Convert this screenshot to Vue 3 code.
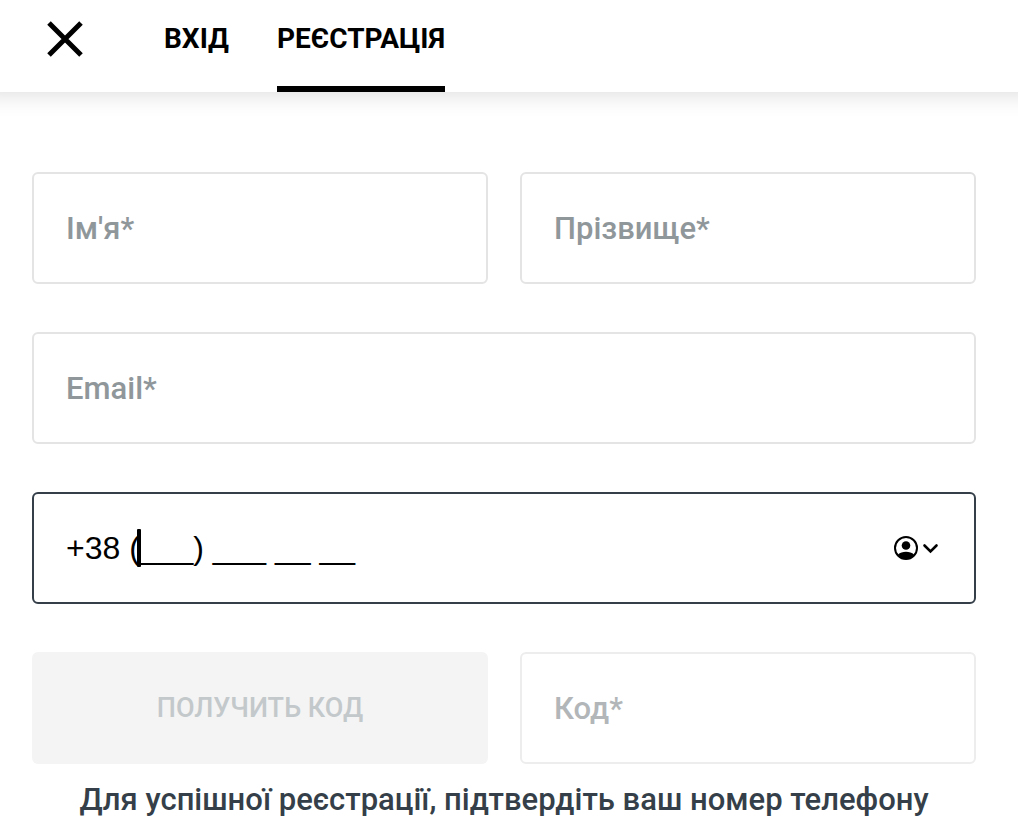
<script setup>
import { ref } from 'vue'

const firstName = ref('')
const lastName = ref('')
const email = ref('')
const phone = ref('+38 (___) ___ __ __')
const code = ref('')
</script>

<template>
  <main class="page">
    <header class="header">
      <button class="close" type="button" aria-label="Закрити">
        <svg width="36" height="36" viewBox="0 0 36 36" aria-hidden="true">
          <path d="M2 2L34 34M34 2L2 34" fill="none" stroke="#000" stroke-width="5" />
        </svg>
      </button>
      <nav class="tabs">
        <a class="tab" href="#login">ВХІД</a>
        <a class="tab active" href="#register" aria-current="page">РЕЄСТРАЦІЯ</a>
      </nav>
    </header>

    <form class="form" @submit.prevent>
      <input v-model="firstName" class="field" type="text" placeholder="Ім'я*" aria-label="Ім'я" />
      <input v-model="lastName" class="field" type="text" placeholder="Прізвище*" aria-label="Прізвище" />
      <input v-model="email" class="field wide" type="email" placeholder="Email*" aria-label="Email" />
      <div class="phone wide">
        <input v-model="phone" class="field focused" type="tel" aria-label="Номер телефону" />
        <span class="caret" aria-hidden="true"></span>
        <button class="autofill" type="button" aria-label="Автозаповнення контакту">
          <svg width="46" height="24" viewBox="0 0 46 24" aria-hidden="true">
            <circle cx="12" cy="12" r="11" fill="none" stroke="#000" stroke-width="2" />
            <circle cx="12" cy="9.5" r="4.3" fill="#000" />
            <path d="M4 18.5C6 16.6 8.8 15.8 12 15.8S18 16.6 20 18.5C18 21.5 15 23 12 23S6 21.5 4 18.5Z" fill="#000" />
            <path d="M30.5 9.5L36.5 15.5L42.5 9.5" fill="none" stroke="#000" stroke-width="2.6" stroke-linecap="round" stroke-linejoin="miter" />
          </svg>
        </button>
      </div>
      <button class="get-code" type="button" disabled>ПОЛУЧИТЬ КОД</button>
      <input v-model="code" class="field" type="text" placeholder="Код*" aria-label="Код" disabled />
    </form>
    <p class="note">Для успішної реєстрації, підтвердіть ваш номер телефону</p>
  </main>
</template>

<style>
body {
  margin: 0;
  background: #fff;
}
</style>

<style scoped>
.page {
  font-family: Roboto, "Noto Sans", sans-serif;
  color: #000;
}

.header {
  display: flex;
  align-items: stretch;
  height: 92px;
  padding-left: 47px;
  box-shadow: 0 -24px 24px 24px rgba(0, 0, 0, 0.16);
}

.close {
  display: flex;
  align-items: flex-start;
  margin: 0;
  padding: 21px 0 0;
  border: 0;
  background: none;
}

.tabs {
  display: flex;
  gap: 48px;
  margin-left: 81px;
}

.tab {
  box-sizing: border-box;
  padding-top: 22px;
  border-bottom: 6px solid transparent;
  color: #000;
  font-size: 28px;
  font-weight: 700;
  line-height: 34px;
  text-decoration: none;
}

.active {
  border-bottom-color: #000;
}

.form {
  display: grid;
  grid-template-columns: 1fr 1fr;
  gap: 48px 32px;
  padding: 80px 42px 0 32px;
}

.field {
  box-sizing: border-box;
  width: 100%;
  min-width: 0;
  height: 112px;
  margin: 0;
  padding: 0 32px;
  border: 2px solid #e4e4e4;
  border-radius: 6px;
  outline: 0;
  background: #fff;
  color: #000;
  font: 500 31px/40px Roboto, "Noto Sans", sans-serif;
}

.field::placeholder {
  color: #90979b;
  opacity: 1;
}

.field:disabled {
  border-color: #ededed;
}

.field:disabled::placeholder {
  color: #b2b6b8;
}

.wide {
  grid-column: 1 / -1;
}

.phone {
  position: relative;
}

.focused {
  display: block;
  border-color: #353f49;
  font-family: "Liberation Sans", sans-serif;
  font-size: 32px;
  font-weight: 400;
}

.caret {
  position: absolute;
  top: 37px;
  left: 105px;
  width: 4px;
  height: 38px;
  border-radius: 1px;
  background: #000;
}

.autofill {
  position: absolute;
  top: 44px;
  right: 36px;
  display: flex;
  padding: 0;
  border: 0;
  background: none;
}

.get-code {
  margin: 0;
  padding: 0;
  border: 0;
  border-radius: 6px;
  background: #f4f4f4;
  color: #c3c8cb;
  font: 500 27px/34px Roboto, "Noto Sans", sans-serif;
}

.note {
  margin: 16px 10px 0 0;
  color: #353f49;
  font-size: 31px;
  font-weight: 500;
  line-height: 40px;
  text-align: center;
}
</style>
